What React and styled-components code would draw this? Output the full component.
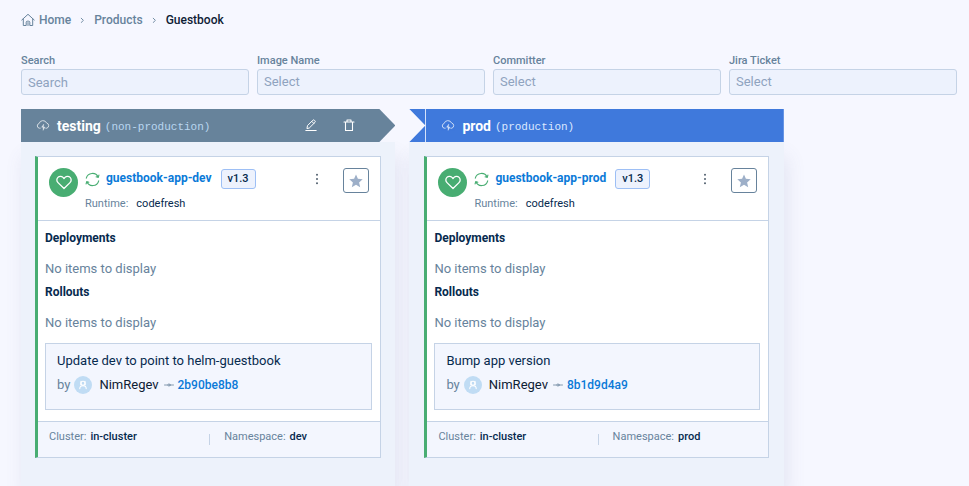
import React from "react";
import styled, { createGlobalStyle, css } from "styled-components";

const color = {
  page: "#f6f7ff",
  panel: "#edf2fb",
  field: "#edf2fd",
  soft: "#f3f6fe",
  line: "#c5d3e6",
  muted: "#67839c",
  ink: "#062a4e",
  dark: "#0d2034",
  link: "#0b7ad8",
  green: "#48ad72",
  slate: "#67839b",
  blue: "#3f79dc",
};

const Global = createGlobalStyle`
  *, *::before, *::after { box-sizing: border-box; }
  body {
    margin: 0;
    background: ${color.page};
    color: ${color.ink};
    font: 500 12px/18px Roboto, "Liberation Sans", sans-serif;
  }
  button, input, select { font: inherit; }
  a { text-decoration: none; }
  h2, h3, h4, p, ol, dl, dd { margin: 0; padding: 0; }
  svg { display: block; flex: none; }
`;

const Page = styled.div`
  display: flex;
  flex-direction: column;
  min-height: 100vh;
  padding: 11px 12px 0 21px;
  overflow: hidden;
`;

const Breadcrumbs = styled.ol`
  display: flex;
  align-items: center;
  gap: 9px;
  height: 18px;
  list-style: none;
  color: ${color.muted};
`;

const Crumb = styled.li`
  display: flex;
  align-items: center;
  gap: 9px;
`;

const CrumbLink = styled.a`
  display: flex;
  align-items: center;
  gap: 4px;
  color: ${({ $current }) => ($current ? color.dark : color.muted)};
`;

const Filters = styled.form`
  display: grid;
  grid-template-columns: repeat(4, minmax(0, 1fr));
  gap: 8px;
  margin-top: 24px;
`;

const Field = styled.label`
  display: flex;
  flex-direction: column;
  color: ${color.muted};
  font-size: 11px;
  line-height: 16px;
`;

const control = css`
  width: 100%;
  height: 26px;
  padding: 0 6px;
  border: 1px solid ${color.line};
  border-radius: 3px;
  background: ${color.field};
  color: #8fa3bf;
  font-size: 13px;
  font-weight: 400;
  appearance: none;
`;

const TextBox = styled.input`
  ${control}
  &::placeholder { color: #8fa3bf; opacity: 1; }
`;

const Select = styled.select`
  ${control}
`;

const Columns = styled.main`
  display: flex;
  flex: 1;
  gap: 14px;
  margin-top: 14px;
`;

const Column = styled.section`
  display: flex;
  flex: 0 0 40%;
  flex-direction: column;
  min-width: 0;
`;

const ColumnHeader = styled.header`
  display: flex;
  align-items: center;
  height: 33px;
  color: #fff;
  ${({ $production }) =>
    $production
      ? css`
          padding: 0 16px 0 32px;
          background: linear-gradient(
            90deg,
            ${color.blue} 16px,
            #d5e2fa 16px,
            #d5e2fa 17px,
            ${color.blue} 17px
          );
          clip-path: polygon(0 0, 100% 0, 100% 100%, 0 100%, 16px 50%);
        `
      : css`
          padding: 0 39px 0 15px;
          background: ${color.slate};
          clip-path: polygon(
            0 0,
            calc(100% - 16px) 0,
            100% 50%,
            calc(100% - 16px) 100%,
            0 100%
          );
        `}
`;

const ColumnTitle = styled.h2`
  margin-left: 7px;
  font-size: 14px;
  font-weight: 700;
`;

const ColumnKind = styled.span`
  margin-left: 4px;
  padding-top: 2px;
  color: ${({ $production }) => ($production ? "#dbe8ff" : "#b9d6f0")};
  font: 400 11px/18px "Liberation Mono", monospace;
`;

const HeaderActions = styled.div`
  display: flex;
  gap: 24px;
  margin-left: auto;
`;

const IconButton = styled.button`
  display: grid;
  place-items: center;
  width: 14px;
  height: 18px;
  padding: 0;
  border: 0;
  background: none;
  color: inherit;
  cursor: pointer;
`;

const ColumnBody = styled.div`
  flex: 1;
  padding: 14px ${({ $production }) => ($production ? "15px" : "14px")};
  background: ${color.panel};
  box-shadow: 3px 14px 18px rgba(90, 100, 150, 0.12);
`;

const Card = styled.article`
  border: 1px solid ${color.line};
  border-left: 3px solid ${color.green};
  background: #fff;
`;

const CardHeader = styled.header`
  display: flex;
  align-items: flex-start;
  height: 64px;
  padding: 11px;
  border-bottom: 1px solid ${color.line};
`;

const Health = styled.span`
  display: grid;
  place-items: center;
  flex: none;
  width: 29px;
  height: 29px;
  border-radius: 50%;
  background: ${color.green};
`;

const AppInfo = styled.div`
  flex: 1;
  margin-left: 7px;
`;

const AppLine = styled.div`
  display: flex;
  align-items: center;
  height: 22px;
`;

const AppName = styled.h3`
  margin: 0 9px 0 6px;
  font-size: 12px;
  line-height: 18px;
  padding-bottom: 2px;
`;

const AppLink = styled.a`
  color: ${color.link};
  font-weight: 700;
`;

const Version = styled.span`
  height: 20px;
  padding: 0 6px;
  border: 1px solid #9dbff5;
  border-radius: 3px;
  background: ${color.field};
  color: ${color.ink};
  font-size: 11px;
`;

const Runtime = styled.dl`
  display: flex;
  gap: 8px;
  margin-top: 5px;
  font-size: 11px;
  dt { color: ${color.muted}; font-weight: 400; }
  dd { color: ${color.ink}; font-weight: 400; }
`;

const MenuButton = styled(IconButton)`
  height: 22px;
  margin-right: 19px;
  color: #52606f;
`;

const StarButton = styled(IconButton)`
  width: 26px;
  height: 25px;
  border: 1px solid ${color.muted};
  border-radius: 3px;
  background: #fff;
`;

const CardBody = styled.div`
  padding: 8px 8px 11px 7px;
`;

const Group = styled.section`
  margin-bottom: 5px;
`;

const GroupTitle = styled.h4`
  font-size: 12px;
  font-weight: 700;
`;

const Empty = styled.p`
  margin-top: 13px;
  color: ${color.muted};
  font-size: 13px;
  font-weight: 400;
`;

const Commit = styled.div`
  height: 67px;
  margin-top: 11px;
  padding: 8px 11px;
  border: 1px solid ${color.line};
  background: ${color.soft};
  font-size: 13px;
  font-weight: 400;
`;

const Author = styled.div`
  display: flex;
  align-items: center;
  gap: 4px;
  margin-top: 6px;
  color: ${color.muted};
`;

const Name = styled.span`
  margin: 0 1px 0 3px;
  color: ${color.dark};
`;

const Hash = styled.a`
  color: ${color.link};
  font-size: 12px;
  font-weight: 500;
`;

const CardFooter = styled.footer`
  height: 36px;
  padding: 6px 11px;
  border-top: 1px solid ${color.line};
  background: ${color.soft};
`;

const Facts = styled.dl`
  display: grid;
  grid-template-columns: 1fr 1fr;
  font-size: 11px;
`;

const Fact = styled.div`
  display: flex;
  align-items: center;
  gap: 4px;
  dt { color: ${color.muted}; font-weight: 400; }
  & + &::before {
    content: "";
    width: 1px;
    height: 11px;
    margin: 4px 10px 0 0;
    background: ${color.line};
  }
`;

const stroke = {
  fill: "none",
  stroke: "currentColor",
  strokeLinecap: "round",
  strokeLinejoin: "round",
  "aria-hidden": true,
};

const HomeIcon = () => (
  <svg width="14" height="14" viewBox="0 0 14 14" {...stroke}>
    <path d="M.8 7 7 1.3 13.2 7M2.3 6v6.5h2.9V9.2c0-.6.4-1 1-1h1.6c.6 0 1 .4 1 1v3.3h2.9V6M7 9.5v3" />
  </svg>
);

const Chevron = () => (
  <svg width="5" height="6" viewBox="0 0 5 6" {...stroke} strokeWidth=".9">
    <path d="M1.2 1.2 3.4 3.4 1.2 5.5" />
  </svg>
);

const CloudIcon = () => (
  <svg width="14" height="12" viewBox="0 0 14 12" {...stroke} opacity=".8">
    <path d="M4.2 8.2H3.4A2.4 2.4 0 0 1 3.1 3.5 4 4 0 0 1 10.6 3a2.7 2.7 0 0 1 .2 5.2h-1" strokeWidth=".9" />
    <path d="M7.6 4.3 5.6 7.2h1.5v3.2l1.9-3.3H7.5z" fill="currentColor" strokeWidth=".4" />
  </svg>
);

const EditIcon = () => (
  <svg width="12" height="13" viewBox="0 0 12 13" {...stroke}>
    <path d="M2 9.2l.5-2.6L7.9 1.2a1 1 0 0 1 1.4 0l.7.7a1 1 0 0 1 0 1.4L4.6 8.7zM6.8 2.4 8.8 4.4M.8 11.5h10.4" />
  </svg>
);

const TrashIcon = () => (
  <svg width="12" height="13" viewBox="0 0 12 13" {...stroke}>
    <path d="M1 3h10M4 2.8V1h4v1.8M2.5 3.2v8.3h7V3.2" strokeWidth="1.1" />
  </svg>
);

const HeartIcon = () => (
  <svg width="16" height="15" viewBox="0 0 16 15" {...stroke} stroke="#fff" strokeWidth="1.3">
    <path d="M8 13.5 2 7.6A3.6 3.6 0 0 1 1.9 2.4a3.6 3.6 0 0 1 5.1 0L8 3.5l1-1.1a3.6 3.6 0 0 1 5.1 0 3.6 3.6 0 0 1-.1 5.2z" />
  </svg>
);

const SyncIcon = () => (
  <svg width="15" height="15" viewBox="0 0 15 15" {...stroke} stroke={color.green} strokeWidth="1.1">
    <path d="M1.3 6.2A6.3 6.3 0 0 1 13.2 5.2M13.7 8.8A6.3 6.3 0 0 1 1.8 9.8M13.9 3.1 13.3 5.4 11.1 4.8M1.1 11.9 1.7 9.6 3.9 10.2" />
  </svg>
);

const DotsIcon = () => (
  <svg width="4" height="12" viewBox="0 0 4 12" fill="currentColor" aria-hidden>
    <circle cx="2" cy="1.8" r="1" />
    <circle cx="2" cy="6" r="1" />
    <circle cx="2" cy="10.2" r="1" />
  </svg>
);

const StarIcon = () => (
  <svg width="14" height="14" viewBox="0 0 14 14" fill="#9dafc8" aria-hidden>
    <path d="m7 .4 1.9 4.3 4.8.5-3.6 3.2 1.1 4.8L7 10.7l-4.2 2.5 1.1-4.8L.3 5.2l4.8-.5z" />
  </svg>
);

const AvatarIcon = () => (
  <svg width="18" height="18" viewBox="0 0 18 18" fill="none" aria-hidden>
    <circle cx="9" cy="9" r="9" fill="#c0dcf4" />
    <g stroke="#fff" strokeWidth="1.1" strokeLinecap="round">
      <circle cx="9" cy="7.2" r="2" />
      <path d="M5.8 12.6c0-1.8 1-2.9 3.2-2.9s3.2 1.1 3.2 2.9M7 5.4 6.8 8.8M11 5.4l.2 3.4" />
    </g>
  </svg>
);

const CommitIcon = () => (
  <svg width="10" height="4" viewBox="0 0 10 4" {...stroke} strokeWidth=".8">
    <path d="M.5 2h3.3M6.2 2h3.3" />
    <circle cx="5" cy="2" r="1.1" />
  </svg>
);

const environments = [
  {
    name: "testing",
    kind: "(non-production)",
    production: false,
    app: "guestbook-app-dev",
    message: "Update dev to point to helm-guestbook",
    hash: "2b90be8b8",
    namespace: "dev",
  },
  {
    name: "prod",
    kind: "(production)",
    production: true,
    app: "guestbook-app-prod",
    message: "Bump app version",
    hash: "8b1d9d4a9",
    namespace: "prod",
  },
];

const AppCard = ({ env }) => (
  <Card>
    <CardHeader>
      <Health><HeartIcon /></Health>
      <AppInfo>
        <AppLine>
          <SyncIcon />
          <AppName><AppLink href="#app">{env.app}</AppLink></AppName>
          <Version>v1.3</Version>
        </AppLine>
        <Runtime>
          <dt>Runtime:</dt>
          <dd>codefresh</dd>
        </Runtime>
      </AppInfo>
      <MenuButton type="button" aria-label="More actions"><DotsIcon /></MenuButton>
      <StarButton type="button" aria-label="Add to favorites"><StarIcon /></StarButton>
    </CardHeader>
    <CardBody>
      {["Deployments", "Rollouts"].map((title) => (
        <Group key={title}>
          <GroupTitle>{title}</GroupTitle>
          <Empty>No items to display</Empty>
        </Group>
      ))}
      <Commit>
        <p>{env.message}</p>
        <Author>
          by
          <AvatarIcon />
          <Name>NimRegev</Name>
          <CommitIcon />
          <Hash href="#commit">{env.hash}</Hash>
        </Author>
      </Commit>
    </CardBody>
    <CardFooter>
      <Facts>
        <Fact><dt>Cluster:</dt><dd>in-cluster</dd></Fact>
        <Fact><dt>Namespace:</dt><dd>{env.namespace}</dd></Fact>
      </Facts>
    </CardFooter>
  </Card>
);

export default function App() {
  return (
    <Page>
      <Global />
      <nav aria-label="Breadcrumb">
        <Breadcrumbs>
          <Crumb><CrumbLink href="#home"><HomeIcon />Home</CrumbLink><Chevron /></Crumb>
          <Crumb><CrumbLink href="#products">Products</CrumbLink><Chevron /></Crumb>
          <Crumb><CrumbLink href="#guestbook" $current aria-current="page">Guestbook</CrumbLink></Crumb>
        </Breadcrumbs>
      </nav>
      <Filters>
        <Field>Search<TextBox type="text" placeholder="Search" /></Field>
        {["Image Name", "Committer", "Jira Ticket"].map((label) => (
          <Field key={label}>
            {label}
            <Select defaultValue=""><option value="">Select</option></Select>
          </Field>
        ))}
      </Filters>
      <Columns>
        {environments.map((env) => (
          <Column key={env.name}>
            <ColumnHeader $production={env.production}>
              <CloudIcon />
              <ColumnTitle>{env.name}</ColumnTitle>
              <ColumnKind $production={env.production}>{env.kind}</ColumnKind>
              {!env.production && (
                <HeaderActions>
                  <IconButton type="button" aria-label="Edit"><EditIcon /></IconButton>
                  <IconButton type="button" aria-label="Delete"><TrashIcon /></IconButton>
                </HeaderActions>
              )}
            </ColumnHeader>
            <ColumnBody $production={env.production}><AppCard env={env} /></ColumnBody>
          </Column>
        ))}
      </Columns>
    </Page>
  );
}
